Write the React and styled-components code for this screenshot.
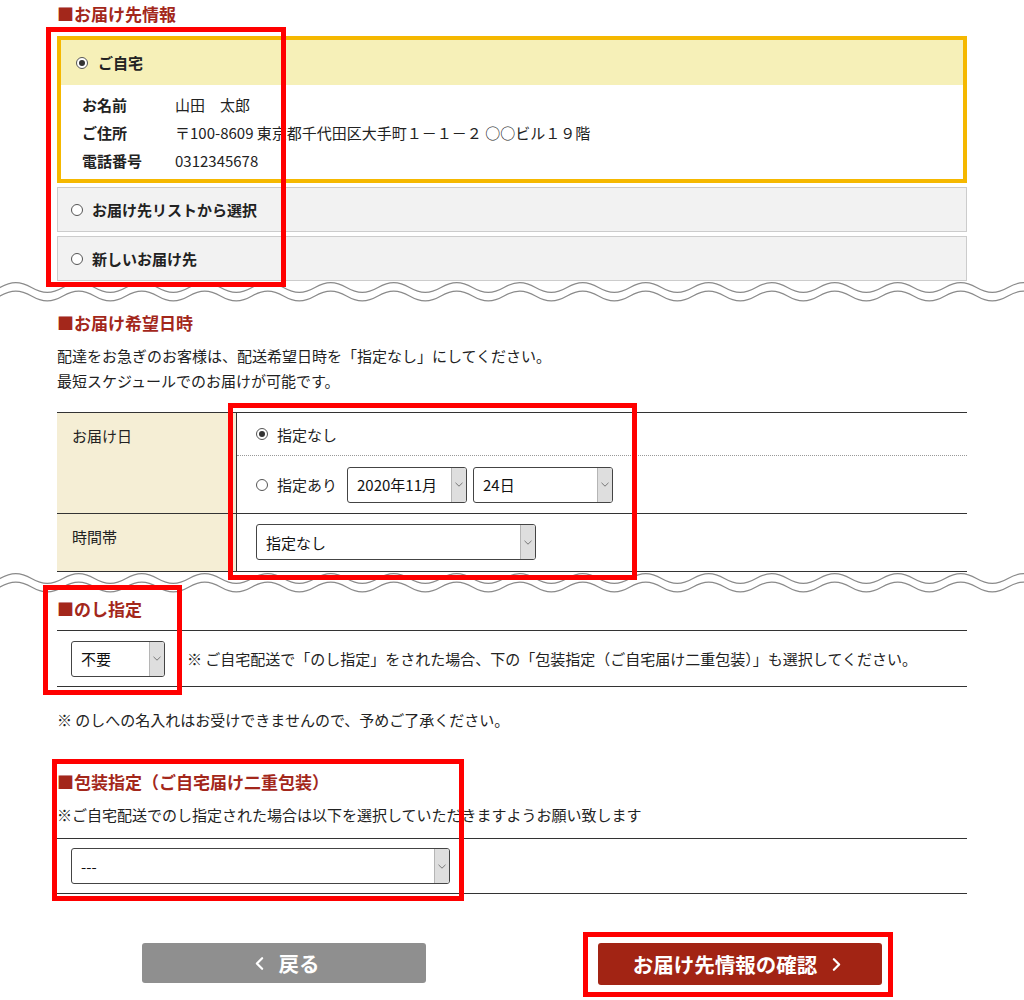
import React from 'react'
import styled, { createGlobalStyle } from 'styled-components'
import { ChevronLeft, ChevronRight } from 'lucide-react'

const GlobalStyle = createGlobalStyle`
    body {
        margin: 0;
        background: #fff;
        color: #333;
        font-family: "Noto Sans CJK JP", "Noto Sans", sans-serif;
        font-size: 15px;
    }
    * { box-sizing: border-box; }
`

const Radio = ({ checked }) => (
    <RadioCircle>{checked && <RadioDot />}</RadioCircle>
)

const Select = ({ value, width }) => (
    <SelectBox $width={width}>
        <SelectValue>{value}</SelectValue>
        <SelectArrow>
            <svg width="8" height="5" viewBox="0 0 8 5">
                <path d="M0.5 0.8 L4 4.2 L7.5 0.8" fill="none" stroke="#777" strokeWidth="1" />
            </svg>
        </SelectArrow>
    </SelectBox>
)

const Wave = () => {
    const period = 63
    const build = (cy) => {
        let d = `M-63 ${cy}`
        for (let x = -63; x < 1100; x += period) {
            d += ` c ${period * 0.18} -6.5 ${period * 0.32} -6.5 ${period / 2} 0 s ${period * 0.32} 6.5 ${period / 2} 0`
        }
        return d
    }
    return (
        <WaveSvg width="1024" height="22" viewBox="0 0 1024 22">
            <path d={build(6.5)} fill="none" stroke="#8a8a8a" strokeWidth="1.2" />
            <path d={build(15)} fill="none" stroke="#8a8a8a" strokeWidth="1.2" />
        </WaveSvg>
    )
}

const marks = [
    { x: 46, y: 27, w: 240, h: 260 },
    { x: 228, y: 403, w: 409, h: 177 },
    { x: 43, y: 585, w: 139, h: 110 },
    { x: 52, y: 759, w: 412, h: 142 },
    { x: 583, y: 932, w: 310, h: 65 },
]

const App = () => {
    return (
        <Page>
            <GlobalStyle />
            <Section>
                <Heading $top={2}>■お届け先情報</Heading>
                <SelectedCard>
                    <CardHead>
                        <Radio checked />
                        <OptionText>ご自宅</OptionText>
                    </CardHead>
                    <CardBody>
                        <InfoRow>
                            <InfoLabel>お名前</InfoLabel>
                            <span>山田　太郎</span>
                        </InfoRow>
                        <InfoRow>
                            <InfoLabel>ご住所</InfoLabel>
                            <span>〒100-8609 東京都千代田区大手町１－１－２ ○○ビル１９階</span>
                        </InfoRow>
                        <InfoRow>
                            <InfoLabel>電話番号</InfoLabel>
                            <span>0312345678</span>
                        </InfoRow>
                    </CardBody>
                </SelectedCard>
                <OptionCard>
                    <Radio />
                    <OptionText>お届け先リストから選択</OptionText>
                </OptionCard>
                <OptionCard>
                    <Radio />
                    <OptionText>新しいお届け先</OptionText>
                </OptionCard>
            </Section>

            <Wave />

            <Section>
                <Heading $top={8}>■お届け希望日時</Heading>
                <Lead>
                    配達をお急ぎのお客様は、配送希望日時を「指定なし」にしてください。<br />
                    最短スケジュールでのお届けが可能です。
                </Lead>
                <DateTable>
                    <TableRow>
                        <LabelCell>お届け日</LabelCell>
                        <ValueCell>
                            <SubRow $height={43} $dotted>
                                <Radio checked />
                                <ChoiceText>指定なし</ChoiceText>
                            </SubRow>
                            <SubRow $height={57}>
                                <Radio />
                                <ChoiceText>指定あり</ChoiceText>
                                <SelectGroup>
                                    <Select value="2020年11月" width={120} />
                                    <Select value="24日" width={140} />
                                </SelectGroup>
                            </SubRow>
                        </ValueCell>
                    </TableRow>
                    <TableRow>
                        <LabelCell>時間帯</LabelCell>
                        <ValueCell>
                            <TimeSlot>
                                <Select value="指定なし" width={280} />
                            </TimeSlot>
                        </ValueCell>
                    </TableRow>
                </DateTable>
            </Section>

            <Wave />

            <Section>
                <Heading $top={3}>■のし指定</Heading>
                <LineRow $top={9} $height={57}>
                    <Select value="不要" width={94} />
                    <RowNote>※ ご自宅配送で「のし指定」をされた場合、下の「包装指定（ご自宅届け二重包装）」も選択してください。</RowNote>
                </LineRow>
                <Note $top={21}>※ のしへの名入れはお受けできませんので、予めご了承ください。</Note>

                <Heading $top={38}>■包装指定（ご自宅届け二重包装）</Heading>
                <Note $top={9}>※ご自宅配送でのし指定された場合は以下を選択していただきますようお願い致します</Note>
                <LineRow $top={11} $height={56}>
                    <Select value="---" width={379} />
                </LineRow>

                <ButtonRow>
                    <Button $tone="back" $height={40}>
                        <ChevronLeft size={21} strokeWidth={2.6} />
                        戻る
                    </Button>
                    <Button $tone="next" $height={42}>
                        お届け先情報の確認
                        <ChevronRight size={21} strokeWidth={2.6} />
                    </Button>
                </ButtonRow>
            </Section>

            {marks.map((m, i) => (
                <Mark key={i} style={{ left: m.x, top: m.y, width: m.w, height: m.h }} />
            ))}
        </Page>
    )
}

export default App

const Page = styled.div`
    position: relative;
    width: 1024px;
    height: 1000px;
    overflow: hidden;
`
const Section = styled.div`
    padding: 0 57px;
`
const Heading = styled.h2`
    margin: ${(p) => p.$top || 0}px 0 0;
    font-size: 17px;
    line-height: 24px;
    font-weight: bold;
    color: #a3271b;
`
const SelectedCard = styled.div`
    margin-top: 10px;
    border: 4px solid #f5b800;
`
const CardHead = styled.div`
    display: flex;
    align-items: center;
    gap: 10px;
    height: 45px;
    padding-left: 15px;
    background: #f6f0b8;
`
const CardBody = styled.div`
    padding: 5px 21px;
    background: #fff;
`
const InfoRow = styled.div`
    display: flex;
    height: 28px;
    align-items: center;
    font-size: 15px;
    color: #222;
`
const InfoLabel = styled.span`
    width: 93px;
    font-weight: bold;
`
const OptionCard = styled.div`
    display: flex;
    align-items: center;
    gap: 9px;
    height: 45px;
    margin-top: 4px;
    padding-left: 13px;
    background: #f2f2f2;
    border: 1px solid #cccccc;
`
const OptionText = styled.span`
    font-size: 15px;
    font-weight: bold;
    color: #222;
`
const RadioCircle = styled.span`
    display: inline-flex;
    align-items: center;
    justify-content: center;
    width: 12px;
    height: 12px;
    border: 1px solid #555;
    border-radius: 50%;
    background: #fff;
    flex-shrink: 0;
`
const RadioDot = styled.span`
    width: 6px;
    height: 6px;
    border-radius: 50%;
    background: #333;
`
const WaveSvg = styled.svg`
    display: block;
`
const Lead = styled.p`
    margin: 8px 0 0;
    line-height: 25px;
    font-size: 15px;
    color: #222;
`
const DateTable = styled.div`
    margin-top: 19px;
    border-top: 1px solid #333;
`
const TableRow = styled.div`
    display: flex;
    border-bottom: 1px solid #333;
`
const LabelCell = styled.div`
    width: 180px;
    padding: 13px 15px;
    line-height: 20px;
    background: #f5eed5;
    border-right: 1px solid #333;
    font-size: 15px;
    color: #222;
`
const ValueCell = styled.div`
    flex: 1;
`
const SubRow = styled.div`
    display: flex;
    align-items: center;
    height: ${(p) => p.$height}px;
    padding-left: 19px;
    border-bottom: ${(p) => (p.$dotted ? '1px dotted #999' : 'none')};
`
const ChoiceText = styled.span`
    margin-left: 9px;
    font-size: 15px;
    color: #222;
`
const SelectGroup = styled.div`
    display: flex;
    gap: 6px;
    margin-left: 10px;
`
const TimeSlot = styled.div`
    padding: 10px 19px 11px;
`
const SelectBox = styled.div`
    display: flex;
    width: ${(p) => p.$width}px;
    height: 36px;
    border: 1px solid #444;
    border-radius: 3px;
    overflow: hidden;
    background: #fff;
`
const SelectValue = styled.span`
    flex: 1;
    display: flex;
    align-items: center;
    padding-left: 9px;
    font-size: 15px;
    color: #111;
    white-space: nowrap;
`
const SelectArrow = styled.span`
    display: flex;
    align-items: center;
    justify-content: center;
    width: 15px;
    background: #dedede;
    border-left: 1px solid #b5b5b5;
`
const LineRow = styled.div`
    display: flex;
    align-items: center;
    height: ${(p) => p.$height}px;
    margin-top: ${(p) => p.$top}px;
    padding-left: 14px;
    border-top: 1px solid #333;
    border-bottom: 1px solid #333;
`
const RowNote = styled.span`
    margin-left: 22px;
    font-size: 15px;
    color: #222;
    white-space: nowrap;
`
const Note = styled.p`
    margin: ${(p) => p.$top}px 0 0;
    line-height: 24px;
    font-size: 15px;
    color: #222;
    white-space: nowrap;
`
const ButtonRow = styled.div`
    display: flex;
    justify-content: center;
    align-items: flex-start;
    gap: 172px;
    margin: 49px -57px 0;
`
const Button = styled.button`
    display: flex;
    align-items: center;
    justify-content: center;
    gap: 9px;
    width: 284px;
    height: ${(p) => p.$height}px;
    border: none;
    border-radius: 3px;
    background: ${(p) => (p.$tone === 'next' ? '#a22414' : '#8f8f8f')};
    color: #fff;
    font-family: inherit;
    font-size: 20.5px;
    font-weight: bold;
    cursor: pointer;
`
const Mark = styled.div`
    position: absolute;
    border: 5px solid #ff0000;
    pointer-events: none;
`
